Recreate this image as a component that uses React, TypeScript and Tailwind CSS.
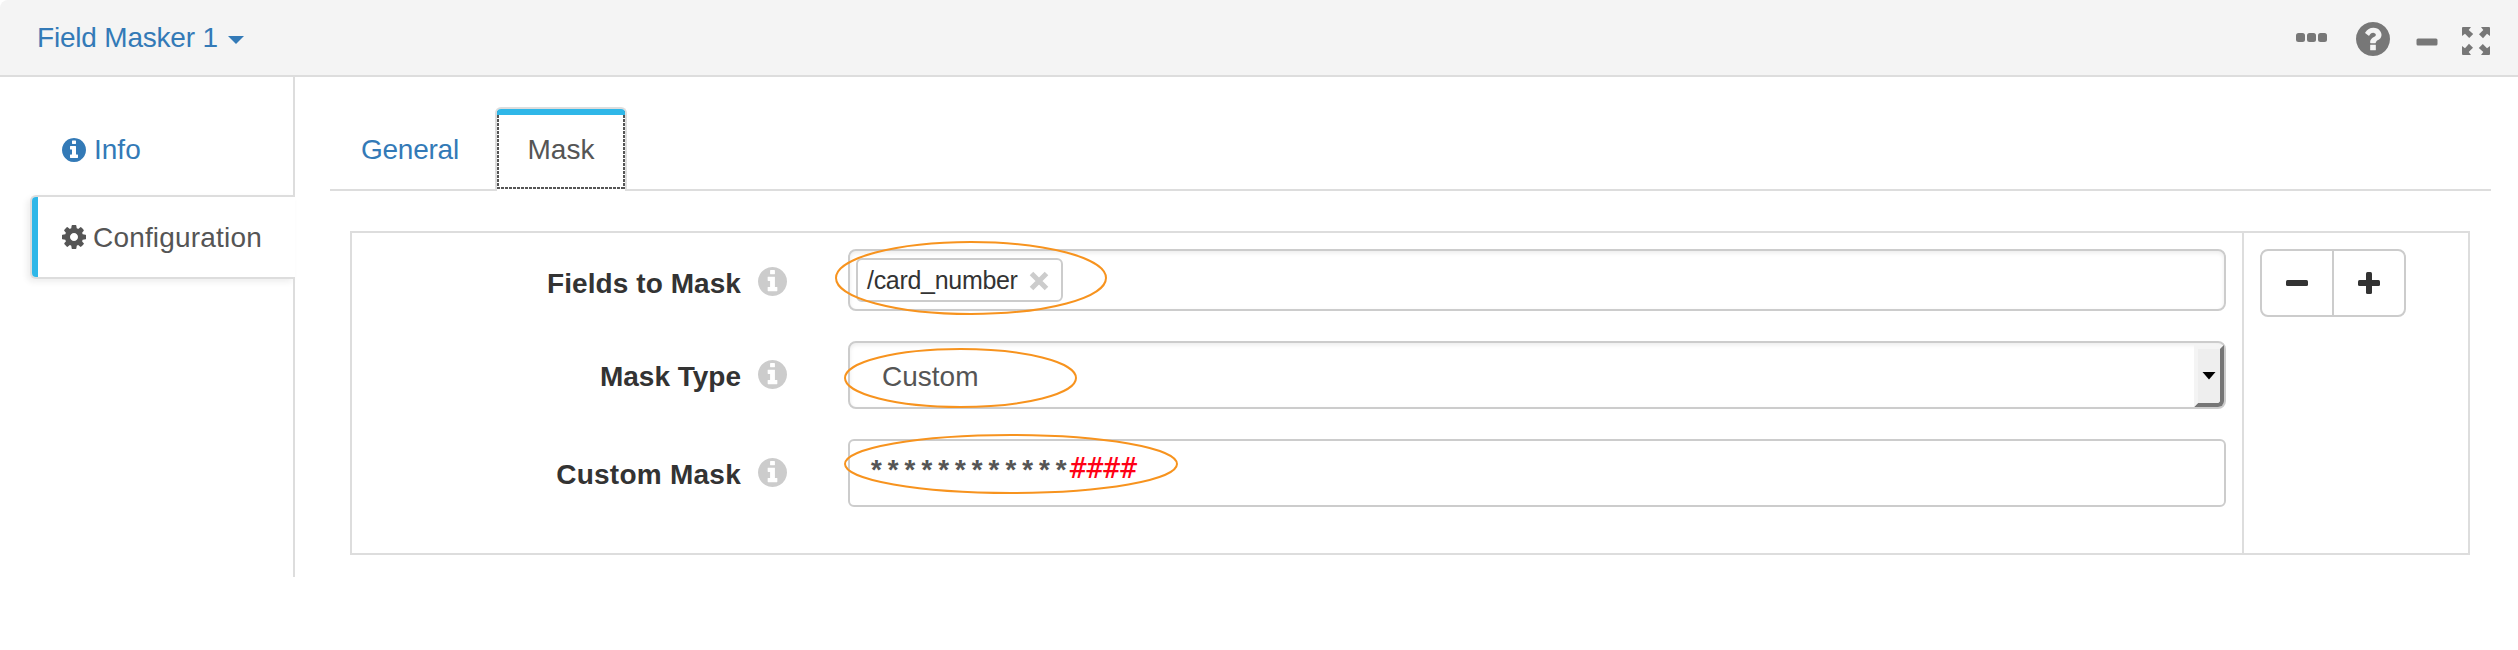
import React from "react";

const ring =
  "M1664 896q0 209-103 385.5t-279.5 279.5-385.5 103-385.5-103-279.5-279.5-103-385.5 103-385.5 279.5-279.5 385.5-103 385.5 103 279.5 279.5 103 385.5z";
const infoPath =
  "M1152 1376v-160q0-14-9-23t-23-9h-96v-512q0-14-9-23t-23-9h-320q-14 0-23 9t-9 23v160q0 14 9 23t23 9h96v320h-96q-14 0-23 9t-9 23v160q0 14 9 23t23 9h448q14 0 23-9t9-23zm-128-896v-160q0-14-9-23t-23-9h-192q-14 0-23 9t-9 23v160q0 14 9 23t23 9h192q14 0 23-9t9-23z" + ring;
const questionPath =
  "M1024 1376v-192q0-14-9-23t-23-9h-192q-14 0-23 9t-9 23v192q0 14 9 23t23 9h192q14 0 23-9t9-23zm256-672q0-88-55.5-163t-138.5-116-170-41q-243 0-371 213-15 24 8 42l132 100q7 6 19 6 16 0 25-12 53-68 86-92 34-24 86-24 48 0 85.5 26t37.5 59q0 38-20 61t-68 45q-63 28-115.5 86.5t-52.5 125.5v36q0 14 9 23t23 9h192q14 0 23-9t9-23q0-19 21.5-49.5t54.5-49.5q32-18 49-28.5t46-35 44.5-48 28-60.5 12.5-81z" + ring;
const cogPath =
  "M1152 896q0-106-75-181t-181-75-181 75-75 181 75 181 181 75 181-75 75-181zm512-109v222q0 12-8 23t-20 13l-185 28q-19 54-39 91 35 50 107 138 10 12 10 25t-9 23q-27 37-99 108t-94 71q-12 0-26-9l-138-108q-44 23-91 38-16 136-29 186-7 28-36 28h-222q-14 0-24.5-8.5t-11.5-21.5l-28-184q-49-16-90-37l-141 107q-10 9-25 9-14 0-25-11-126-114-165-168-7-10-7-23 0-12 8-23 15-21 51-66.5t54-70.5q-27-50-41-99l-183-27q-13-2-21-12.5t-8-23.5v-222q0-12 8-23t19-13l186-28q14-46 39-92-40-57-107-138-10-12-10-24 0-10 9-23 26-36 98.5-107.5t94.5-71.5q13 0 26 10l138 107q44-23 91-38 16-136 29-186 7-28 36-28h222q14 0 24.5 8.5t11.5 21.5l28 184q49 16 90 37l142-107q9-9 24-9 13 0 25 10 129 119 165 170 7 8 7 22 0 12-8 23-15 21-51 66.5t-54 70.5q26 50 41 98l183 28q13 2 21 12.5t8 23.5z";

function Glyph({ d, className }: { d: string; className: string }) {
  return (
    <svg viewBox="128 128 1536 1536" className={className} fill="currentColor" fillRule="evenodd">
      <path d={d} />
    </svg>
  );
}

function Ellipse({ className, w, h }: { className: string; w: number; h: number }) {
  return (
    <svg width={w} height={h} className={"pointer-events-none absolute " + className}>
      <ellipse cx={w / 2} cy={h / 2} rx={w / 2 - 1} ry={h / 2 - 1} fill="none" stroke="#f7931e" strokeWidth="2" />
    </svg>
  );
}

function Header() {
  return (
    <header className="flex h-[77px] shrink-0 items-start justify-between rounded-tl-lg border-b-2 border-[#ddd] bg-[#f4f4f4] pl-[37px] pr-7">
      <button className="flex items-center pt-[22px] text-[#337ab7]">
        <span className="w-[182px] whitespace-nowrap text-left text-[28px] leading-8 tracking-[-0.2px]">Field Masker 1</span>
        <svg width="16" height="8" className="ml-[9px] mt-[3px]" fill="currentColor">
          <path d="M0 0h16l-8 8z" />
        </svg>
      </button>
      <div className="flex text-[#777]">
        <svg width="31" height="9" className="mt-[33px]" fill="currentColor">
          <rect width="9" height="9" rx="2.5" />
          <rect x="11" width="9" height="9" rx="2.5" />
          <rect x="22" width="9" height="9" rx="2.5" />
        </svg>
        <Glyph d={questionPath} className="ml-[29px] mt-[22px] size-[34px]" />
        <svg width="22" height="8" className="ml-[26px] mt-[38px]" fill="currentColor">
          <rect x="0.5" y="0.5" width="21" height="7" rx="1.5" />
        </svg>
        <svg width="28" height="28" viewBox="0 0 28 28" className="ml-6 mt-[27px]" fill="currentColor">
          {[0, 90, 180, 270].map((a) => (
            <path key={a} transform={`rotate(${a} 14 14)`} d="M1 0H9L6.7 3L11.2 7L7.2 11L3 6.7L0 9V1Q0 0 1 0z" />
          ))}
        </svg>
      </div>
    </header>
  );
}

function Sidebar() {
  return (
    <nav className="flex h-[500px] w-[295px] shrink-0 flex-col text-[28px] leading-8">
      <a className="flex h-[118px] items-center border-r-2 border-[#ddd] pl-[62px] pt-[27px] text-[#337ab7]">
        <Glyph d={infoPath} className="size-6" />
        <span className="ml-2">Info</span>
      </a>
      <a className="ml-[30px] flex h-[84px] items-center rounded-l-md border-y-2 border-l-2 border-[#ddd] bg-white text-[#555] shadow-[-3px_3px_6px_rgba(0,0,0,0.07)]">
        <span className="h-full w-[6px] rounded-l bg-[#2fb7e8]" />
        <Glyph d={cogPath} className="ml-6 size-6" />
        <span className="ml-[7px] mt-px tracking-[0.18px]">Configuration</span>
      </a>
      <div className="grow border-r-2 border-[#ddd]" />
    </nav>
  );
}

function Tabs() {
  return (
    <div className="flex h-[84px] text-[28px] leading-8">
      <a className="flex w-[165px] items-center border-b-2 border-[#ddd] pl-[31px] pt-1 tracking-[-0.25px] text-[#337ab7]">General</a>
      <div className="w-[132px] rounded-t-md border-x-2 border-t-2 border-[#ddd] pb-[2px]">
        <div className="relative flex h-full items-center justify-center overflow-hidden rounded-t pt-[2px] text-[#555]">
          <svg width="128" height="80" className="absolute left-0 top-0">
            <path d="M1 2V79M0 79H128M127 2V80" stroke="#555" strokeWidth="2" strokeDasharray="3 1" fill="none" />
          </svg>
          <span className="absolute inset-x-0 top-0 h-[6px] bg-[#2fb7e8]" />
          Mask
        </div>
      </div>
      <div className="grow border-b-2 border-[#ddd]" />
    </div>
  );
}

function Label({ text, className }: { text: string; className: string }) {
  return (
    <div className={"flex w-[435px] shrink-0 items-start justify-end text-[#333] " + className}>
      <span className="mt-px text-[28px] font-bold leading-8">{text}</span>
      <Glyph d={infoPath} className="ml-[17px] size-[29px] text-[#ccc]" />
    </div>
  );
}

export default function App() {
  return (
    <div className="flex h-[650px] w-[2518px] flex-col bg-white font-['Liberation_Sans',Arial,sans-serif]">
      <Header />
      <div className="flex">
        <Sidebar />
        <main className="ml-[35px] w-[2161px] pt-[30px]">
          <Tabs />
          <section className="ml-5 mt-10 flex h-[324px] w-[2120px] border-2 border-[#ddd]">
            <div className="flex w-[1892px] shrink-0 flex-col border-r-2 border-[#ddd] pt-4">
              <div className="flex h-[62px]">
                <Label text="Fields to Mask" className="pt-[18px] tracking-[0.07px]" />
                <div className="relative ml-[61px] w-[1378px] rounded-lg border-2 border-[#ccc] p-[7px] pl-[6px] shadow-[inset_0_2px_4px_rgba(0,0,0,0.08)]">
                  <div className="flex h-11 w-[207px] items-center rounded-md border-2 border-[#ccc] bg-white pl-[9px] text-[#333]">
                    <span className="w-[151px] whitespace-nowrap text-[25px] leading-8 tracking-[-0.3px]">/card_number</span>
                    <svg width="20" height="20" className="ml-[11px] mt-px">
                      <path d="M2.5 2.5l15 15M17.5 2.5l-15 15" stroke="#ccc" strokeWidth="5" />
                    </svg>
                  </div>
                  <Ellipse w={272} h={74} className="left-[-15px] top-[-10px]" />
                </div>
              </div>
              <div className="mt-[30px] flex h-[68px]">
                <Label text="Mask Type" className="pt-[19px]" />
                <div className="relative ml-[61px] flex w-[1378px] items-center justify-between rounded-lg border-2 border-[#ccc] pl-8 text-[28px] leading-8 text-[#555] shadow-[inset_0_2px_4px_rgba(0,0,0,0.08)]">
                  <span className="pt-[3px]">Custom</span>
                  <span className="flex h-[62px] w-[30px] items-center justify-center self-end rounded-br-md border-4 border-b-[#767676] border-l-[#f4f4f4] border-r-[#767676] border-t-[#f4f4f4] bg-[#eee]">
                    <svg width="14" height="8">
                      <path d="M0.5 0h13l-6.5 7.5z" fill="#000" />
                    </svg>
                  </span>
                  <Ellipse w={233} h={60} className="left-[-6px] top-[5px]" />
                </div>
              </div>
              <div className="mt-[30px] flex h-[68px]">
                <Label text="Custom Mask" className="pt-[19px] tracking-[0.25px]" />
                <div className="relative ml-[61px] w-[1378px] rounded-md border-2 border-[#ccc] pl-[18px] pt-[10px]">
                  <div className="flex items-baseline text-[28px] leading-9 text-[#555]">
                    <span className="pt-[2px] font-['Liberation_Mono',monospace] font-bold">
                      <span className="relative top-[2px]">************</span>
                    </span>
                    <span className="font-['DejaVu_Sans_Mono',monospace] text-[#ff0015]">####</span>
                  </div>
                  <Ellipse w={334} h={60} className="left-[-6px] top-[-7px]" />
                </div>
              </div>
            </div>
            <div className="pl-4 pt-4">
              <div className="flex h-[68px] w-[146px] rounded-lg border-2 border-[#ccc] text-[#333]">
                <button className="flex w-[72px] items-center justify-center border-r-2 border-[#ccc]">
                  <svg width="22" height="22" fill="currentColor">
                    <rect y="8" width="22" height="6" rx="1.5" />
                  </svg>
                </button>
                <button className="flex w-[70px] items-center justify-center">
                  <svg width="22" height="22" fill="currentColor">
                    <rect y="8" width="22" height="6" rx="1.5" />
                    <rect x="8" width="6" height="22" rx="1.5" />
                  </svg>
                </button>
              </div>
            </div>
          </section>
        </main>
      </div>
    </div>
  );
}
